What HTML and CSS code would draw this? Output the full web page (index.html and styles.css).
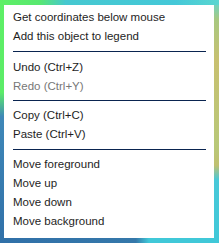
FILE: index.html
```html
<!DOCTYPE html>
<html>
<head>
<meta charset="utf-8">
<link rel="stylesheet" href="styles.css">
</head>
<body>
<div class="canvas">
  <ul class="menu">
    <li class="item">Get coordinates below mouse</li>
    <li class="item">Add this object to legend</li>
    <li class="sep sep-first"></li>
    <li class="item">Undo (Ctrl+Z)</li>
    <li class="item disabled">Redo (Ctrl+Y)</li>
    <li class="sep sep-second"></li>
    <li class="item">Copy (Ctrl+C)</li>
    <li class="item">Paste (Ctrl+V)</li>
    <li class="sep"></li>
    <li class="item">Move foreground</li>
    <li class="item">Move up</li>
    <li class="item">Move down</li>
    <li class="item">Move background</li>
  </ul>
</div>
</body>
</html>
```

FILE: styles.css
```css
html, body {
  margin: 0;
  padding: 0;
}
body {
  width: 219px;
  height: 243px;
  overflow: hidden;
  font-family: "Liberation Sans", Arial, sans-serif;
}
.canvas {
  width: 219px;
  height: 243px;
  box-sizing: border-box;
  padding: 5px 5px 5px 4px;
  background:
    linear-gradient(to right, #5ef066 0, #58e870 18%, #46c8d0 30%, #44c8d8 80%, #5ad6d0 100%) top / 100% 5px no-repeat,
    linear-gradient(to bottom, #5ef066 0, #5cec68 38%, #3f88b8 48%, #3070a8 100%) left / 4px 100% no-repeat,
    linear-gradient(to bottom, #62d6d0 0, #a8c880 8%, #c8c070 25%, #b8c878 60%, #c0c070 68%, #48c8d8 74%, #40c8d8 100%) right / 5px 100% no-repeat,
    linear-gradient(to right, #3070a8 0, #3578aa 62%, #40c8d8 68%, #40c8d8 100%) bottom / 100% 5px no-repeat,
    #40c8d8;
}
.menu {
  list-style: none;
  margin: 0;
  padding: 3px 8px 8px 9px;
  background: #ffffff;
  height: 100%;
  box-sizing: border-box;
}
.item {
  font-size: 11.5px;
  line-height: 19px;
  height: 19px;
  color: #1e1e1e;
  white-space: nowrap;
}
.item.disabled {
  color: #777777;
}
.sep {
  height: 1px;
  background: #0a2450;
  margin: 5px 0 5px 0;
}
.sep-first {
  margin-bottom: 6px;
}
.sep-second {
  margin-top: 4px;
}
```
